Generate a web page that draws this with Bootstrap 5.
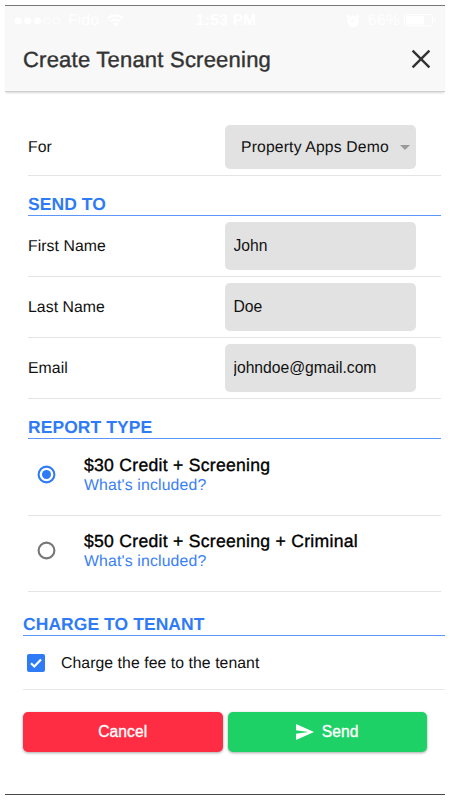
<!DOCTYPE html>
<html lang="en">
<head>
<meta charset="utf-8">
<meta name="viewport" content="width=device-width, initial-scale=1">
<title>Create Tenant Screening</title>
<link href="https://cdn.jsdelivr.net/npm/bootstrap@5.3.0/dist/css/bootstrap.min.css" rel="stylesheet">
<style>
  body { font-family: "Liberation Sans", Arial, sans-serif; font-size: 15.8px; letter-spacing: .06px; line-height: 20px; color: #111; background: #fff; text-rendering: geometricPrecision; }
  .screen { width: 440px; height: 790px; margin: 5px 0 0 5px; border-top: 1px solid #77777a; border-bottom: 1px solid #48484a; }
  .app-header { height: 86px; background: #f8f8f8; border-bottom: 1px solid #cfcfcf; box-shadow: 0 2px 2px -1px rgba(0,0,0,.16); }
  .status { height: 29px; padding: 0 7px 0 9px; color: #fff; font-size: 15.5px; letter-spacing: .3px; }
  .clock { margin-right: 18px; }
  .title-row { height: 50px; padding: 0 14px 0 18px; }
  .page-title { font-size: 22px; line-height: 26px; letter-spacing: .22px; color: #333; -webkit-text-stroke: .4px #333; }
  .close-btn { line-height: 0; margin-top: -2px; }
  .form-body { padding: 28px 4px 0 23px; }
  .field-row { height: 61px; padding-right: 25px; border-bottom: 1px solid #e4e4e4; }
  .field-row.first { height: 56px; padding-bottom: 1px; }
  .field-row label, .field-name, .charge-label, .picker-text { padding-top: 2px; }
  .field-row .form-control, .picker { width: 191px; height: 48px; padding: 0 9px 0 8.5px; border: 0; border-radius: 5px; background: #e2e2e2; color: #111; font-size: 15.7px; letter-spacing: -.02px; }
  .picker { height: 44px; padding: 0 6px 0 16px; letter-spacing: .17px; }
  .section-title { height: 40px; padding-bottom: 1px; border-bottom: 1px solid #5c96fa; color: #2f7bf6; font-size: 17.5px; line-height: 20px; letter-spacing: .06px; }
  .option-row { height: 77px; padding: 16px 0 0 9px; border-bottom: 1px solid #e4e4e4; }
  .option-row.last { height: 76px; padding-top: 15px; }
  .option-icon { margin: 9.5px 28px 0 0; }
  .option-title { font-size: 17.6px; letter-spacing: .27px; color: #000; -webkit-text-stroke: .35px #000; }
  .option-link { font-size: 15.8px; letter-spacing: .16px; color: #3a80f5; line-height: 22px; }
  .charge { padding: 0 0 0 18px; }
  .charge .section-title { height: 44px; }
  .charge-row { height: 54px; padding-left: 4px; border-bottom: 1px solid #e8e8e8; }
  .actions { padding: 22px 18px 0 18px; gap: 5px; }
  .actions .btn { height: 40px; padding: 0; border: 0; border-radius: 5px; color: #fff; font-size: 15.6px; letter-spacing: .1px; -webkit-text-stroke: .35px #fff; box-shadow: 0 1px 3px rgba(0,0,0,.35); }
  .btn-cancel, .btn-cancel:hover { background: #ff2d44; }
  .btn-send, .btn-send:hover { background: #1dd166; }
</style>
<script src="https://cdn.jsdelivr.net/npm/bootstrap@5.3.0/dist/js/bootstrap.bundle.min.js"></script>
</head>
<body>
<main class="screen">
  <header class="app-header">
    <div class="status d-flex justify-content-between align-items-center">
      <div class="d-flex align-items-center">
        <svg width="46" height="10" viewBox="0 0 46 10" fill="#fff" stroke="#fff"><circle cx="4.2" cy="5" r="3.3"/><circle cx="13.7" cy="5" r="3.3"/><circle cx="23.2" cy="5" r="3.3"/><circle cx="32.7" cy="5" r="3.3" fill="none"/><circle cx="42.2" cy="5" r="3.3" fill="none"/></svg>
        <span class="ms-2">Fido</span>
        <svg class="ms-2" width="17" height="13" viewBox="0 0 17 13" fill="none" stroke="#fff" stroke-width="2.2"><path d="M1 4.5a10.6 10.6 0 0 1 15 0M3.8 7.5a6.6 6.6 0 0 1 9.4 0"/><path d="M8.5 12.5 6 9.8a3.5 3.5 0 0 1 5 0z" fill="#fff" stroke="none"/></svg>
      </div>
      <span class="clock fw-bold">1:53 PM</span>
      <div class="d-flex align-items-center">
        <svg class="me-2" width="14" height="14" viewBox="0 0 14 14"><circle cx="7" cy="7.5" r="5.8" fill="#fff"/><path d="M1 3.5 3.5 1M13 3.5 10.5 1" stroke="#fff" stroke-width="2"/><path d="M7 4.5v3H4.5" fill="none" stroke="#f8f8f8"/></svg>
        <span>66%</span>
        <svg class="ms-1" width="34" height="13" viewBox="0 0 34 13"><rect x=".5" y=".5" width="28" height="11.5" rx="2" fill="none" stroke="#fff"/><rect x="2" y="2" width="18" height="8.5" fill="#fff"/><path d="M30 4q3 2.2 0 4.500z" fill="#fff"/></svg>
      </div>
    </div>
    <div class="title-row d-flex justify-content-between align-items-center">
      <h1 class="page-title fw-normal m-0">Create Tenant Screening</h1>
      <button class="close-btn btn p-0 border-0" aria-label="Close"><svg width="20" height="20" viewBox="0 0 20 20" stroke="#333" stroke-width="2.4"><path d="M1.600 1.600 18.400 18.400M18.400 1.600 1.600 18.400"/></svg></button>
    </div>
  </header>

  <section class="form-body">
    <div class="field-row first d-flex justify-content-between align-items-center">
      <span class="field-name">For</span>
      <div class="picker d-flex justify-content-between align-items-center"><span class="picker-text">Property Apps Demo</span><svg width="10" height="5" viewBox="0 0 10 5"><path d="M0 0h10L5 5z" fill="#999"/></svg></div>
    </div>
    <h2 class="section-title fw-bold m-0 d-flex align-items-end">SEND TO</h2>
    <div class="field-row d-flex justify-content-between align-items-center">
      <label for="first">First Name</label><input id="first" class="form-control" value="John">
    </div>
    <div class="field-row d-flex justify-content-between align-items-center">
      <label for="last">Last Name</label><input id="last" class="form-control" value="Doe">
    </div>
    <div class="field-row d-flex justify-content-between align-items-center">
      <label for="email">Email</label><input id="email" class="form-control" value="johndoe@gmail.com">
    </div>
    <h2 class="section-title fw-bold m-0 d-flex align-items-end">REPORT TYPE</h2>
    <div class="option-row d-flex align-items-start">
      <svg class="option-icon flex-shrink-0" width="19" height="19" viewBox="0 0 19 19"><circle cx="9.500" cy="9.500" r="7.900" fill="none" stroke="#2f7bf6" stroke-width="2.1"/><circle cx="9.500" cy="9.500" r="4.500" fill="#2f7bf6"/></svg>
      <div><div class="option-title">$30 Credit + Screening</div><div class="option-link">What's included?</div></div>
    </div>
    <div class="option-row last d-flex align-items-start">
      <svg class="option-icon flex-shrink-0" width="19" height="19" viewBox="0 0 19 19"><circle cx="9.500" cy="9.500" r="7.900" fill="none" stroke="#777" stroke-width="2.1"/></svg>
      <div><div class="option-title">$50 Credit + Screening + Criminal</div><div class="option-link">What's included?</div></div>
    </div>
  </section>

  <section class="charge">
    <h2 class="section-title fw-bold m-0 d-flex align-items-end">CHARGE TO TENANT</h2>
    <div class="charge-row d-flex align-items-center">
      <svg width="18" height="18" viewBox="0 0 18 18"><rect width="18" height="18" rx="2" fill="#2f7bf6"/><path d="m4 9.300 3.300 3.200L14 5.500" fill="none" stroke="#fff" stroke-width="2.200"/></svg>
      <span class="charge-label ms-3">Charge the fee to the tenant</span>
    </div>
  </section>

  <div class="actions d-flex">
    <button class="btn btn-cancel flex-fill w-50">Cancel</button>
    <button class="btn btn-send flex-fill w-50 d-flex align-items-center justify-content-center"><svg class="me-2" width="18" height="16" viewBox="0 0 18 16"><path d="M0 0 18 8 0 16V9.800L12.500 8 0 6.200z" fill="#fff"/></svg>Send</button>
  </div>
</main>
</body>
</html>
